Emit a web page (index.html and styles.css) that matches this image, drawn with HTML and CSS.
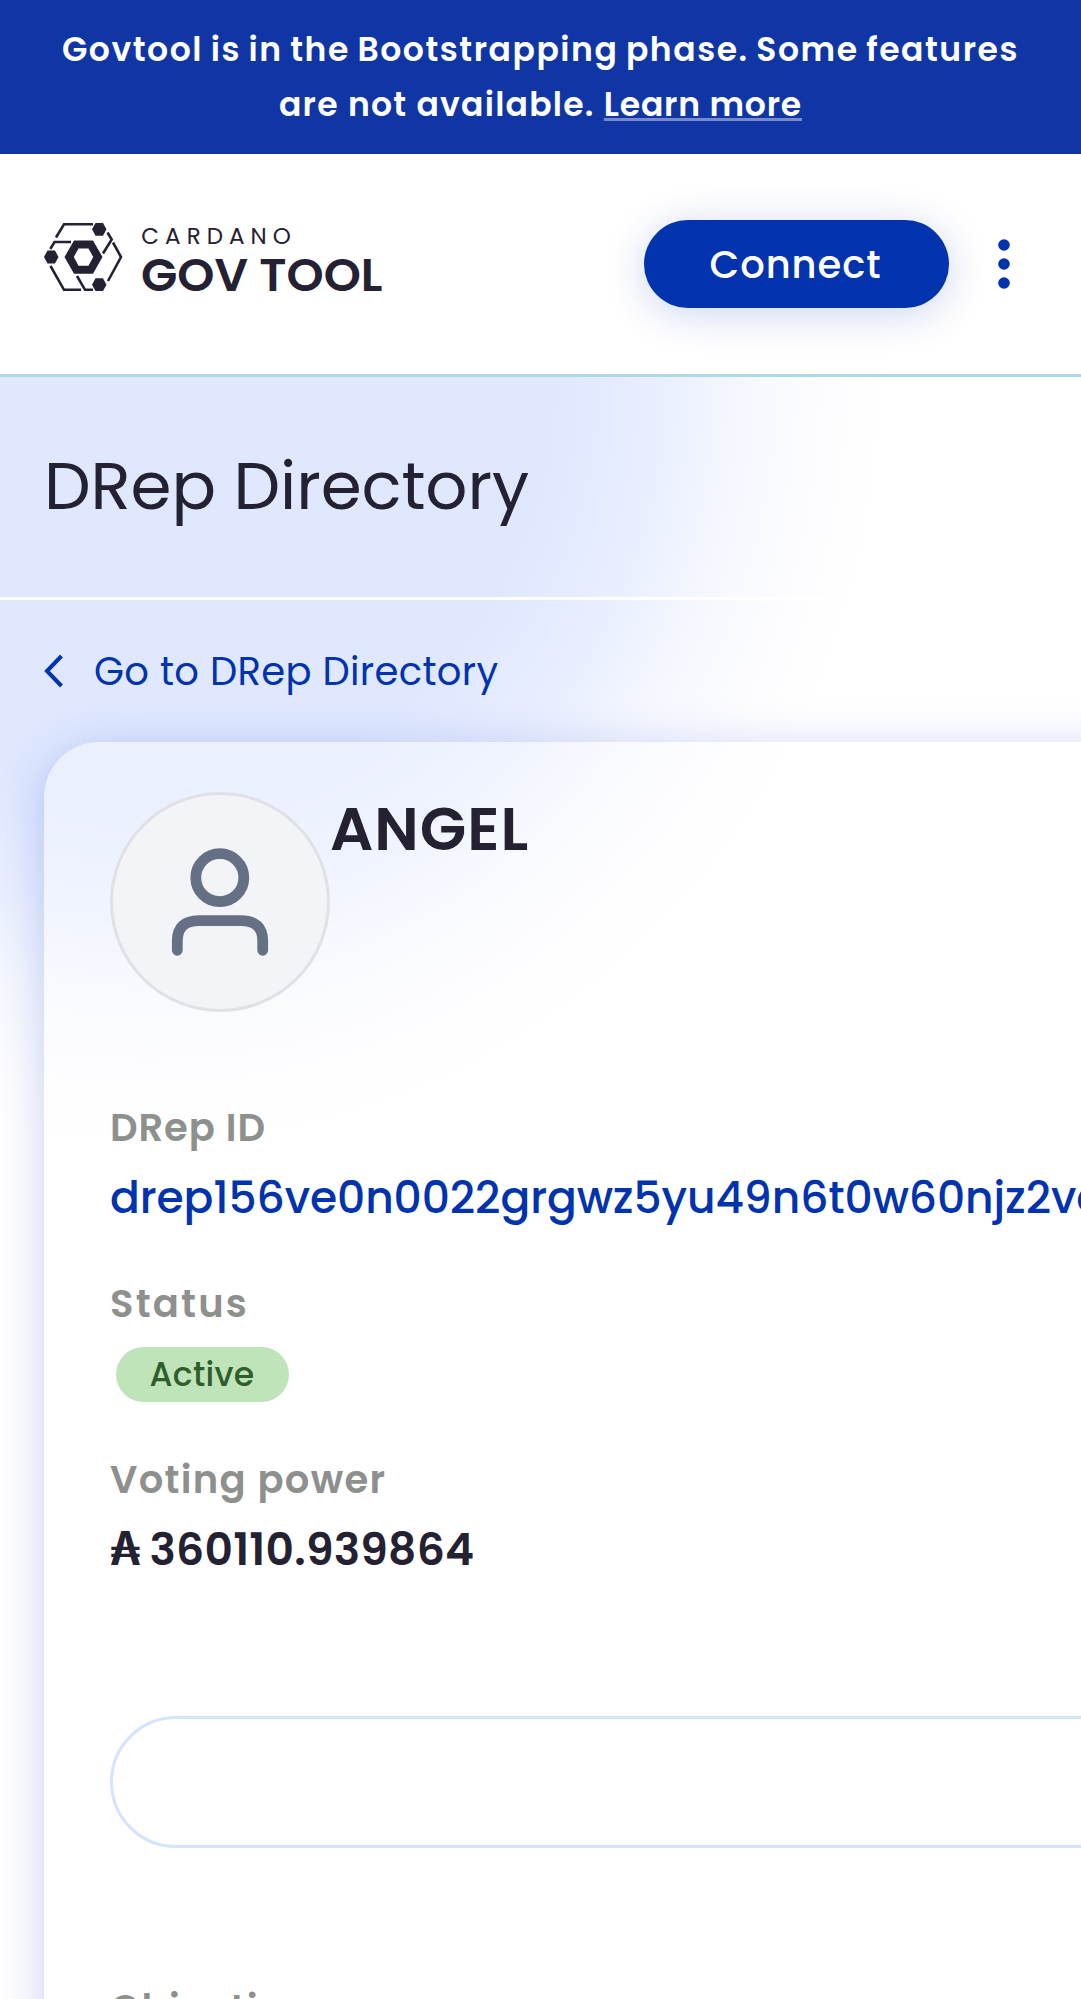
FILE: index.html
```html
<!DOCTYPE html>
<html lang="en">
<head>
<meta charset="utf-8">
<title>GovTool - DRep Directory</title>
<link rel="stylesheet" href="styles.css">
</head>
<body>
<div class="banner"><p>Govtool is in the Bootstrapping phase. Some features<br><span class="banner-second">are not available. <a class="banner-link" href="#">Learn more</a></span></p></div>
<header class="header">
  <svg class="logo" width="340" height="70" viewBox="44 222 340 70" role="img" aria-label="Cardano GovTool">
    <g fill="none" stroke="#242232" stroke-width="2.6">
      <path d="M56 237.5 64 224.3H93"/>
      <path d="M50.3 249 54.5 242H71"/>
      <path d="M107.5 232.5 111.7 239.5 103 253.5"/>
      <path d="M113 242.5 121 257 108 281"/>
      <path d="M50.5 266 64 289.8H81"/>
      <path d="M77 276 85 289.8H93"/>
    </g>
    <path fill="#242232" fill-rule="evenodd" d="M74 240.5H93L102.5 257 93 273.7H74L64.5 257ZM78.5 248.5 73.8 257 78.5 265.7H88.5L93.2 257 88.5 248.5Z"/>
    <path fill="#242232" d="M95.5 223h7.5l3.5 6.3-3.5 6.4h-7.5l-3.5-6.4ZM47.5 250.5H55l3.5 6.5-3.5 6.5h-7.5L44 257ZM95.5 278.3h7.5l3.5 6.4-3.5 6.3h-7.5l-3.5-6.3Z"/>
    <text class="logo-small" x="141.3" y="244.3" textLength="149.5">CARDANO</text>
    <text class="logo-large" x="141" y="290.5" textLength="241.5" lengthAdjust="spacingAndGlyphs">GOV TOOL</text>
  </svg>
  <div class="actions">
    <button class="connect">Connect</button>
    <svg class="more" width="12" height="52" viewBox="0 0 12 52" fill="#0033ad"><circle cx="6" cy="7" r="5.8"/><circle cx="6" cy="26" r="5.8"/><circle cx="6" cy="45" r="5.8"/></svg>
  </div>
</header>
<main class="page">
  <div class="title-bar"><h1 class="title">DRep Directory</h1></div>
  <a class="back" href="#">
    <svg width="20" height="34" viewBox="0 0 20 34" fill="none" stroke="#0033ad" stroke-width="4"><path d="M17.5 2 3 17 17.5 32"/></svg>
    <span>Go to DRep Directory</span>
  </a>
  <section class="card">
    <div class="profile">
      <div class="avatar">
        <svg width="110" height="110" viewBox="165 847 110 110" fill="none" stroke="#667085" stroke-width="10.8" stroke-linecap="round"><circle cx="219.8" cy="877.7" r="24"/><path d="M177.3 950.3V941Q177.3 920.6 199 920.6H241Q262.7 920.6 262.7 941V950.3"/></svg>
      </div>
      <h2 class="name">ANGEL</h2>
    </div>
    <div class="fields">
      <div class="field"><div class="label label-id">DRep ID</div><div class="value drep-id">drep156ve0n0022grgwz5yu49n6t0w60njz2ve</div></div>
      <div class="field"><div class="label label-status">Status</div><div class="status">Active</div></div>
      <div class="field"><div class="label label-power">Voting power</div><div class="value power"><span class="ada">₳</span><span>360110.939864</span></div></div>
    </div>
    <div class="share"></div>
    <div class="label label-power">Objectives</div>
  </section>
</main>
</body>
</html>
```
FILE: styles.css
```css
* { box-sizing: border-box; }
html { overflow: hidden; }
body {
  margin: 0;
  height: 1999px;
  overflow: hidden;
  background: #fff;
  color: #242232;
  font-family: Poppins, Inter, sans-serif;
}
h1, h2, p { margin: 0; }
a { color: inherit; text-decoration: none; }

.banner {
  height: 154px;
  padding-top: 22px;
  background: #1036a5;
  color: #fff;
  text-align: center;
  font-size: 33px;
  font-weight: 600;
  line-height: 55px;
  letter-spacing: 1.55px;
  word-spacing: -1.8px;
  white-space: nowrap;
}
.banner-second { letter-spacing: 1.25px; word-spacing: 0; }
.banner-link {
  letter-spacing: .8px;
  text-decoration: underline;
  text-decoration-color: rgba(255, 255, 255, .42);
  text-decoration-thickness: 3px;
  text-underline-offset: 2px;
  text-decoration-skip-ink: none;
}

.header {
  display: flex;
  align-items: center;
  justify-content: space-between;
  height: 223px;
  padding: 0 71px 0 44px;
  background: #fff;
  border-bottom: 3px solid #add8e6;
}
.logo { display: block; margin-bottom: 14px; fill: #242232; overflow: visible; }
.logo-small { font-size: 23px; font-weight: 400; }
.logo-large { font-size: 46px; font-weight: 600; }
.actions { display: flex; align-items: center; gap: 49px; }
.connect {
  width: 305px;
  height: 88px;
  padding: 1px 2px 0 0;
  border: 0;
  border-radius: 44px;
  background: #0033ad;
  box-shadow: 0 6px 42px rgba(0, 51, 173, .2);
  color: #fff;
  font: 500 38.5px/87px Poppins, Inter, sans-serif;
  letter-spacing: .9px;
}
.more { display: block; }

.page {
  height: 1622px;
  overflow: hidden;
  background: radial-gradient(ellipse 735px 770px at 150px 0, #e0e8ff 55%, #e8eeff 68%, #f6f8ff 81%, #fdfdff 93%, #fff 100%);
}
.title-bar {
  display: flex;
  align-items: center;
  height: 223px;
  padding: 0 44px 2px;
  border-bottom: 3px solid #fff;
}
.title { font-size: 66px; font-weight: 400; line-height: 90px; letter-spacing: -.1px; }
.back {
  display: flex;
  align-items: center;
  gap: 30px;
  height: 142px;
  padding-left: 44px;
  color: #0033ad;
  font-size: 38.5px;
  letter-spacing: .35px;
}

.card {
  width: 1400px;
  height: 1500px;
  margin-left: 44px;
  padding: 50px 66px;
  border-radius: 55px;
  background: rgba(255, 255, 255, .35);
  box-shadow: 0 8px 46px rgba(40, 70, 190, .25);
}
.profile { display: flex; }
.avatar {
  display: flex;
  align-items: center;
  justify-content: center;
  width: 220px;
  height: 220px;
  border: 3px solid #e0e1e5;
  border-radius: 50%;
  background: #f2f4f8;
}
.name { font-size: 60.5px; font-weight: 600; line-height: 74px; letter-spacing: 1px; }
.fields { display: grid; gap: 45px; margin-top: 87.5px; }
.field { height: 131px; }
.label { color: #8e908e; font-size: 38.5px; font-weight: 600; line-height: 56px; }
.label-id { letter-spacing: .9px; }
.label-status { letter-spacing: 2.2px; }
.label-power { letter-spacing: 1.3px; }
.value { margin-top: 9px; font-size: 44px; line-height: 66px; white-space: nowrap; }
.drep-id { color: #0033ad; font-weight: 500; letter-spacing: -.1px; }
.power { display: flex; align-items: baseline; font-weight: 600; letter-spacing: .25px; }
.ada {
  width: 39.5px;
  font-family: Inter, sans-serif;
  font-weight: 700;
  line-height: 44px;
  transform: scale(.94, 1.06);
  transform-origin: 0 85%;
}
.status {
  width: 173px;
  height: 55px;
  margin: 15.5px 0 0 5.5px;
  border-radius: 28px;
  background: #c0e4ba;
  color: #2f5e2a;
  font-size: 33px;
  font-weight: 500;
  line-height: 55px;
  letter-spacing: .3px;
  text-align: center;
}
.share { height: 132px; margin: 133px 0; border: 3px solid #d6e2ff; border-radius: 66px; }
```
